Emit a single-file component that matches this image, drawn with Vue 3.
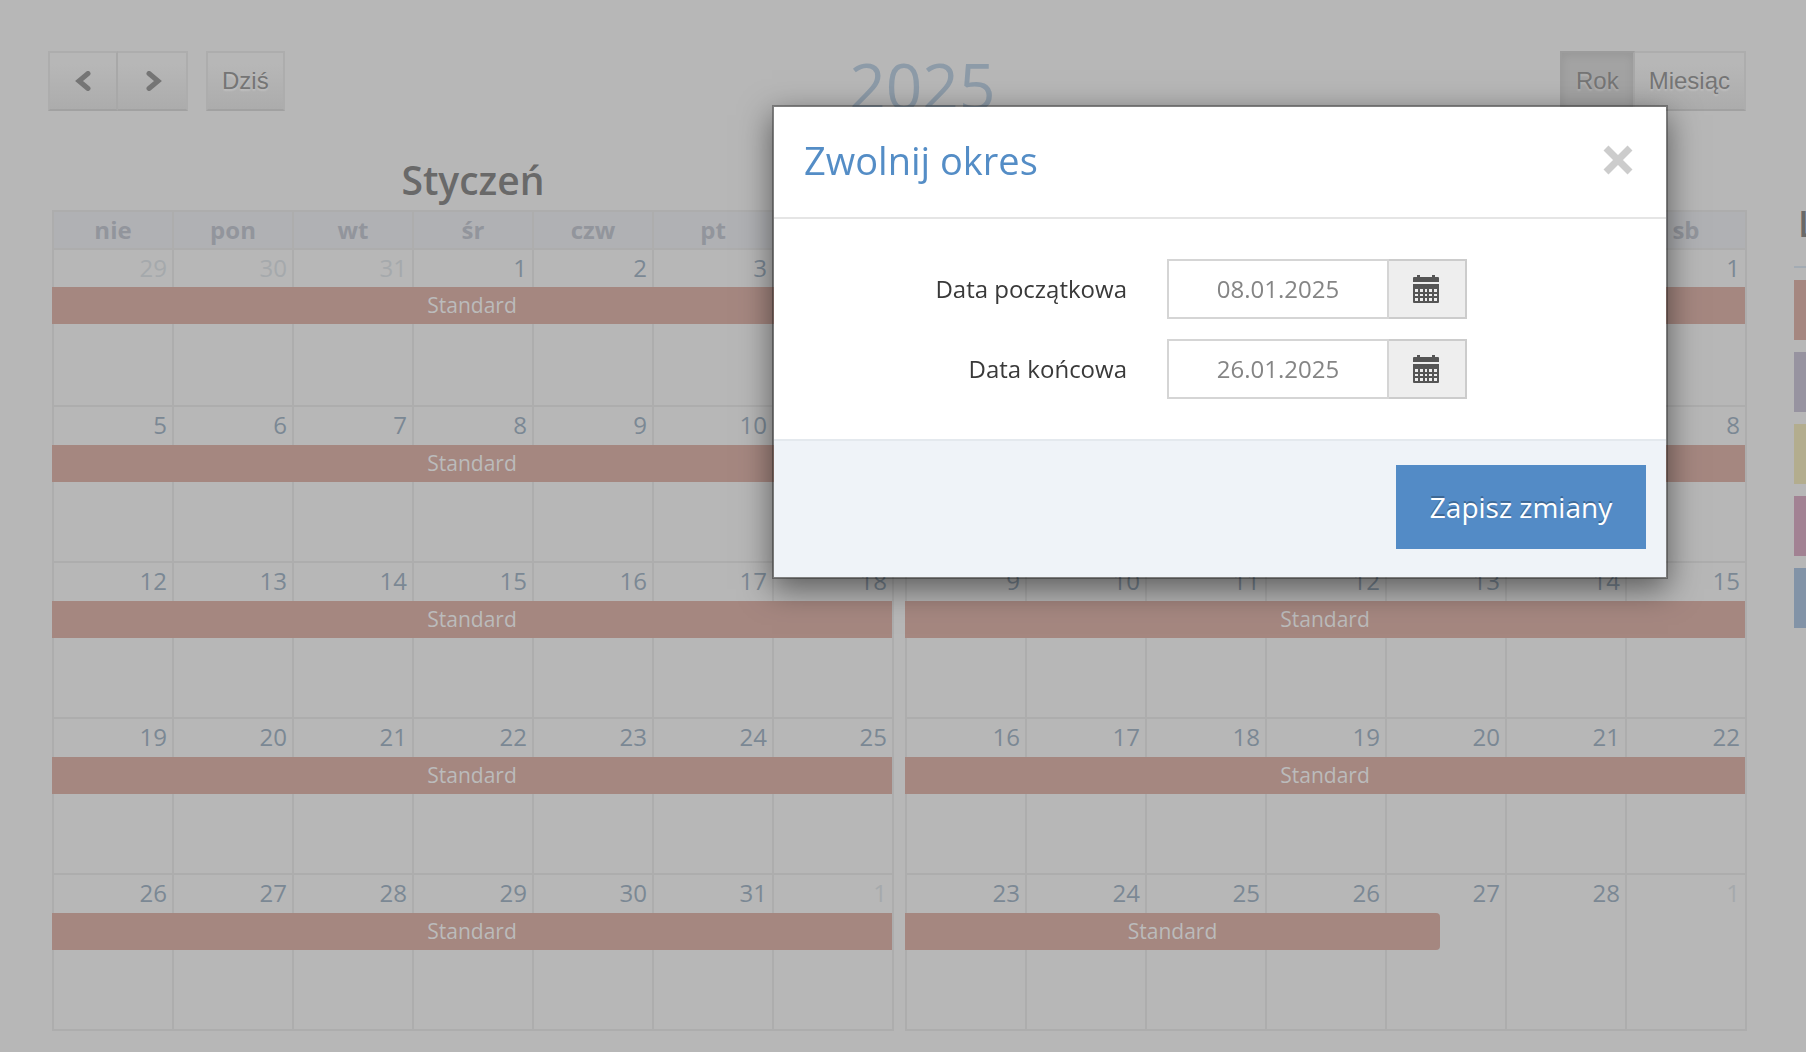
<script setup>
import { ref } from 'vue'

const weekdays = ['nie', 'pon', 'wt', 'śr', 'czw', 'pt', 'sb']

function weeks(first, length, previous) {
  const rows = []
  for (let w = 0; w < 5; w++) {
    const row = []
    for (let d = 0; d < 7; d++) {
      const n = w * 7 + d - first + 1
      if (n < 1) row.push({ label: previous + n, other: true })
      else if (n > length) row.push({ label: n - length, other: true })
      else row.push({ label: n, other: false })
    }
    rows.push(row)
  }
  return rows
}

const months = [
  { name: 'Styczeń', weeks: weeks(3, 31, 31), bars: [100, 100, 100, 100, 100] },
  { name: 'Luty', weeks: weeks(6, 28, 31), bars: [100, 100, 100, 100, 63.7] }
]
const legend = ['red', 'violet', 'yellow', 'pink', 'blue']
const startDate = ref('08.01.2025')
const endDate = ref('26.01.2025')
const view = ref('year')
</script>

<template>
  <div class="page">
    <main class="main">
      <header class="toolbar">
        <div class="side">
          <div class="group">
            <button type="button" class="btn arrow" aria-label="Poprzedni">
              <svg width="16" height="20" viewBox="0 0 16 20"><path d="M13 2.500L4 10L13 17.500" /></svg>
            </button>
            <button type="button" class="btn arrow" aria-label="Następny">
              <svg width="20" height="20" viewBox="0 0 20 20"><path d="M7 2.500L16 10L7 17.500" /></svg>
            </button>
          </div>
          <button type="button" class="btn">Dziś</button>
        </div>
        <h1>2025</h1>
        <div class="group">
          <button type="button" class="btn" :class="{ active: view === 'year' }" @click="view = 'year'">Rok</button>
          <button type="button" class="btn" :class="{ active: view === 'month' }" @click="view = 'month'">Miesiąc</button>
        </div>
      </header>

      <div class="months">
        <section v-for="month in months" :key="month.name" class="month">
          <h2>{{ month.name }}</h2>
          <table>
            <thead>
              <tr>
                <th v-for="day in weekdays" :key="day" scope="col">{{ day }}</th>
              </tr>
            </thead>
            <tbody>
              <tr v-for="(week, w) in month.weeks" :key="w">
                <td v-for="(day, d) in week" :key="d" :class="{ other: day.other }">
                  {{ day.label }}
                  <div v-if="d === 0" class="event" :class="{ last: month.bars[w] < 100 }" :style="{ width: month.bars[w] + '%' }">Standard</div>
                </td>
              </tr>
            </tbody>
          </table>
        </section>
      </div>
    </main>

    <aside class="legend">
      <h3>L</h3>
      <ul>
        <li v-for="color in legend" :key="color" :class="color"></li>
      </ul>
    </aside>

    <div class="overlay">
      <form class="modal" role="dialog" aria-labelledby="modal-title" @submit.prevent>
        <div class="modal-header">
          <h4 id="modal-title">Zwolnij okres</h4>
          <button type="button" class="close" aria-label="Zamknij">
            <svg width="30" height="30" viewBox="0 0 30 30"><path d="M3 3L27 27M27 3L3 27" /></svg>
          </button>
        </div>
        <div class="modal-body">
          <div class="field">
            <label for="start">Data początkowa</label>
            <div class="input-group">
              <input id="start" v-model="startDate" type="text" />
              <span class="addon">
                <svg width="26" height="28" viewBox="0 0 26 28">
                  <path fill-rule="evenodd" d="M4 0h3v2h12V0h3v2h3q1 0 1 1v4H0V3q0-1 1-1h3zM0 9h26v18q0 1-1 1H1q-1 0-1-1zM2 14v3h3v-3zM7 14v3h3v-3zM12 14v3h2v-3zM16 14v3h3v-3zM21 14v3h3v-3zM2 19v2h3v-2zM7 19v2h3v-2zM12 19v2h2v-2zM16 19v2h3v-2zM21 19v2h3v-2zM2 23v3h3v-3zM7 23v3h3v-3zM12 23v3h2v-3zM16 23v3h3v-3zM21 23v3h3v-3z" />
                </svg>
              </span>
            </div>
          </div>
          <div class="field">
            <label for="end">Data końcowa</label>
            <div class="input-group">
              <input id="end" v-model="endDate" type="text" />
              <span class="addon">
                <svg width="26" height="28" viewBox="0 0 26 28">
                  <path fill-rule="evenodd" d="M4 0h3v2h12V0h3v2h3q1 0 1 1v4H0V3q0-1 1-1h3zM0 9h26v18q0 1-1 1H1q-1 0-1-1zM2 14v3h3v-3zM7 14v3h3v-3zM12 14v3h2v-3zM16 14v3h3v-3zM21 14v3h3v-3zM2 19v2h3v-2zM7 19v2h3v-2zM12 19v2h2v-2zM16 19v2h3v-2zM21 19v2h3v-2zM2 23v3h3v-3zM7 23v3h3v-3zM12 23v3h2v-3zM16 23v3h3v-3zM21 23v3h3v-3z" />
                </svg>
              </span>
            </div>
          </div>
        </div>
        <div class="modal-footer">
          <button type="submit" class="save">Zapisz zmiany</button>
        </div>
      </form>
    </div>
  </div>
</template>

<style>
body {
  margin: 0;
  background: #b7b7b7;
}
</style>

<style scoped>
.page,
.page * {
  box-sizing: border-box;
}
.page {
  display: flex;
  gap: 48px;
  min-height: 100vh;
  padding: 51px 0 21px 48px;
  overflow: hidden;
  background: #b7b7b7;
  color: #666;
  font-family: "Open Sans", sans-serif;
  font-size: 24px;
}
h1,
h2,
h3,
h4,
ul {
  margin: 0;
  padding: 0;
}
button {
  margin: 0;
  font-family: inherit;
  cursor: pointer;
}
.main {
  flex: 1;
  min-width: 0;
}

/* toolbar */
.toolbar {
  display: flex;
  align-items: flex-start;
  justify-content: space-between;
  height: 100px;
}
.side {
  display: flex;
  gap: 18px;
}
.group {
  display: flex;
}
.btn {
  height: 60px;
  padding: 0 14px;
  border: 2px solid #adadad;
  border-bottom-color: #a1a1a1;
  background: linear-gradient(#b7b7b7, #b7b7b7 20%, #acacac);
  color: #757575;
  font: 24px "Liberation Sans", Arial, sans-serif;
  text-shadow: 0 2px 2px rgba(255, 255, 255, 0.2);
}
.group .btn + .btn {
  border-left: 0;
}
.group .btn:not(:last-child) {
  border-right-color: #a8a8a8;
}
.btn.arrow {
  display: flex;
  align-items: center;
  justify-content: center;
  width: 70px;
  padding: 0;
}
.arrow path {
  fill: none;
  stroke: #757575;
  stroke-width: 5;
  stroke-linecap: round;
}
.btn.active {
  border-color: #9c9c9c;
  background: #a3a3a3;
  box-shadow: inset 0 2px 10px rgba(0, 0, 0, 0.08);
}
h1 {
  color: #8d9ba8;
  font-size: 64px;
  font-weight: 400;
  line-height: 70px;
}

/* calendars */
.months {
  display: flex;
  gap: 11px;
  margin: 0 -1px 0 4px;
}
.month {
  flex: 1;
  min-width: 0;
}
h2 {
  height: 59px;
  color: #696969;
  font-size: 39px;
  font-weight: 600;
  line-height: 58px;
  text-align: center;
}
table {
  width: 100%;
  table-layout: fixed;
  border-collapse: separate;
  border-spacing: 0;
  border: solid #adadad;
  border-width: 0 2px 2px 0;
}
th,
td {
  padding: 0;
  border: solid #adadad;
  border-width: 2px 0 0 2px;
}
th {
  height: 38px;
  background: #b0b1b4;
  color: #92959c;
  font-weight: 700;
  line-height: 34px;
}
tbody tr {
  position: relative;
}
td {
  height: 156px;
  padding: 0 5px 0 0;
  color: #7b8894;
  line-height: 36px;
  text-align: right;
  vertical-align: top;
}
tbody tr:first-child td {
  height: 157px;
}
td.other {
  color: #a5a9ac;
}
.event {
  position: absolute;
  top: 40px;
  left: 0;
  height: 37px;
  background: #a58780;
  color: #bbb;
  font-size: 21px;
  line-height: 37px;
  text-align: center;
}
tbody tr:first-child .event {
  top: 39px;
}
.event.last {
  border-radius: 0 4px 4px 0;
}

/* legend column */
.legend {
  flex: 0 0 12px;
  padding-top: 148px;
  overflow: hidden;
}
h3 {
  height: 69px;
  padding-left: 4px;
  border-bottom: 2px solid #a3abb3;
  color: #696969;
  font-size: 36px;
  font-weight: 600;
  line-height: 50px;
}
ul {
  display: flex;
  flex-direction: column;
  gap: 12px;
  padding-top: 12px;
  list-style: none;
}
li {
  height: 60px;
}
.red { background: #a58780; }
.violet { background: #9793a0; }
.yellow { background: #b3ad8e; }
.pink { background: #a28293; }
.blue { background: #8293a7; }

/* dialog */
.overlay {
  position: fixed;
  inset: 0;
  display: flex;
  align-items: flex-start;
  justify-content: flex-end;
  padding: 105px 138px 0 0;
}
.modal {
  width: 896px;
  border: 2px solid rgba(0, 0, 0, 0.3);
  background: #fff;
  background-clip: padding-box;
  box-shadow: 0 10px 30px rgba(0, 0, 0, 0.5);
}
.modal-header {
  display: flex;
  align-items: center;
  justify-content: space-between;
  height: 112px;
  padding: 0 33px 4px 30px;
  border-bottom: 2px solid #e5e5e5;
}
h4 {
  color: #548dc6;
  font-size: 38px;
  font-weight: 400;
  line-height: 56px;
}
.close {
  display: flex;
  padding: 0;
  border: 0;
  background: none;
}
.close path {
  stroke: #ccc;
  stroke-width: 7;
}
.modal-body {
  display: flex;
  flex-direction: column;
  gap: 20px;
  padding: 40px 0;
}
.field {
  display: flex;
  align-items: center;
  gap: 40px;
}
label {
  width: 353px;
  padding-bottom: 2px;
  color: #393939;
  text-align: right;
}
.input-group {
  display: flex;
  width: 300px;
}
input {
  flex: 1;
  min-width: 0;
  height: 60px;
  padding: 0 8px 2px;
  border: 2px solid #d5d5d5;
  border-radius: 0;
  background: #fff;
  color: #858585;
  font: inherit;
  text-align: center;
}
.addon {
  display: flex;
  align-items: center;
  justify-content: center;
  width: 78px;
  padding-right: 2px;
  border: 2px solid #ccc;
  border-left: 0;
  background: #eee;
}
.addon path {
  fill: #555;
}
.modal-footer {
  display: flex;
  justify-content: flex-end;
  padding: 24px 20px 28px;
  border-top: 2px solid #e4e9ee;
  background: #eff3f8;
}
.save {
  width: 250px;
  height: 84px;
  padding: 0;
  border: 0;
  background: #538bc6;
  color: #fff;
  font-size: 28px;
  text-shadow: 0 -2px 0 rgba(0, 0, 0, 0.25);
}
</style>
